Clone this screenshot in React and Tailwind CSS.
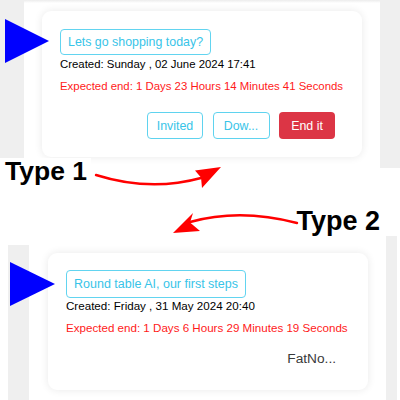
const font = { fontFamily: '"Liberation Sans", Arial, sans-serif' };

function Pointer({ className, points }) {
  return (
    <svg className={`absolute ${className}`} width="50" height="50" viewBox="0 0 50 50">
      <polygon points={points} fill="#0000ff" />
    </svg>
  );
}

function OutlineBtn({ children, w }) {
  return (
    <button className={`h-[27px] ${w} flex items-center justify-center rounded-[4px] border border-[#5fd3ef] text-[12.4px] text-[#38c4e8]`}>
      {children}
    </button>
  );
}

function CardOne() {
  return (
    <div className="ml-[18px] mt-[8px] w-[320px] rounded-[9px] bg-white p-[18px] shadow-[0_0_9px_rgba(0,0,0,0.09)]">
      <div className="inline-flex h-[26px] items-center rounded-[4px] border border-[#62d4f0] px-[7px] text-[12.4px] text-[#38c4e8]">
        Lets go shopping today?
      </div>
      <p className="mt-[2px] text-[11.4px] leading-[15px] text-black">Created: Sunday , 02 June 2024 17:41</p>
      <p className="mt-[6.5px] text-[11.4px] leading-[15px] text-[#ff1a1a]">Expected end: 1 Days 23 Hours 14 Minutes 41 Seconds</p>
      <div className="mt-[18.5px] flex justify-end gap-[9.5px] pr-[9px]">
        <OutlineBtn w="w-[56px]">Invited</OutlineBtn>
        <OutlineBtn w="w-[57px]">Dow...</OutlineBtn>
        <button className="flex h-[27px] w-[56px] items-center justify-center rounded-[4px] bg-[#dc3545] text-[12.4px] text-white">
          End it
        </button>
      </div>
    </div>
  );
}

function CardTwo() {
  return (
    <div className="ml-[19px] mt-[17px] w-[320px] rounded-[9px] bg-white px-[18px] pt-[17px] pb-[22px] shadow-[0_0_9px_rgba(0,0,0,0.09)]">
      <div className="inline-flex h-[28px] items-center rounded-[4px] border border-[#62d4f0] px-[7px] text-[12.5px] text-[#38c4e8]">
        Round table AI, our first steps
      </div>
      <p className="text-[11.6px] leading-[15px] text-black">Created: Friday , 31 May 2024 20:40</p>
      <p className="mt-[6.6px] text-[11.6px] leading-[15px] text-[#ff1a1a]">Expected end: 1 Days 6 Hours 29 Minutes 19 Seconds</p>
      <div className="mt-[15.4px] flex justify-end pr-[14px]">
        <span className="text-[13.7px] leading-[18px] text-[#3a3a3a]">FatNo...</span>
      </div>
    </div>
  );
}

export default function App() {
  return (
    <div className="relative h-[400px] w-[400px] overflow-hidden bg-white" style={font}>
      {/* Type 1 screenshot */}
      <div className="flex h-[168px]">
        <div className="w-[24px] bg-[#efefef]" />
        <div className="flex flex-1 flex-col bg-white">
          <div className="h-[3px] bg-gradient-to-b from-[#ececec] to-white" />
          <CardOne />
        </div>
        <div className="w-[20px] bg-[#efefef]" />
      </div>

      {/* gap between the two captures */}
      <div className="h-[68px]" />

      {/* Type 2 screenshot */}
      <div className="flex h-[164px]">
        <div className="w-[8px] bg-white" />
        <div className="w-[21px] bg-[#efefef]" />
        <div className="flex-1 bg-white">
          <CardTwo />
        </div>
        <div className="w-[11px] bg-[#efefef]" />
        <div className="w-[3px] bg-white" />
      </div>

      {/* annotations */}
      <div className="absolute left-0 top-[236px] h-[9px] w-[303px] bg-white" />
      <Pointer className="left-[5px] top-[19px]" points="0,0 44,22 0,44" />
      <Pointer className="left-[10px] top-[262px]" points="0,0 45,22 0,44" />

      <div className="absolute left-0 top-[157.5px] bg-white pl-[5px] pr-[4px] text-[26.5px] font-bold leading-none text-black">
        Type 1
      </div>
      <div className="absolute left-[296.5px] top-[208px] text-[27px] font-bold leading-none text-black">
        Type 2
      </div>

      <svg className="pointer-events-none absolute left-0 top-0" width="400" height="400" viewBox="0 0 400 400">
        <path d="M96 175 Q150 192 201 178" fill="none" stroke="#ff0000" strokeWidth="2.4" strokeLinecap="round" />
        <polygon points="221,167 195,170.5 201,177.5 202,188" fill="#ff0000" />
        <path d="M297 223 Q240 208 190 222" fill="none" stroke="#ff0000" strokeWidth="2.4" strokeLinecap="round" />
        <polygon points="173,233 193,213 190,222.5 200,231" fill="#ff0000" />
      </svg>
    </div>
  );
}
